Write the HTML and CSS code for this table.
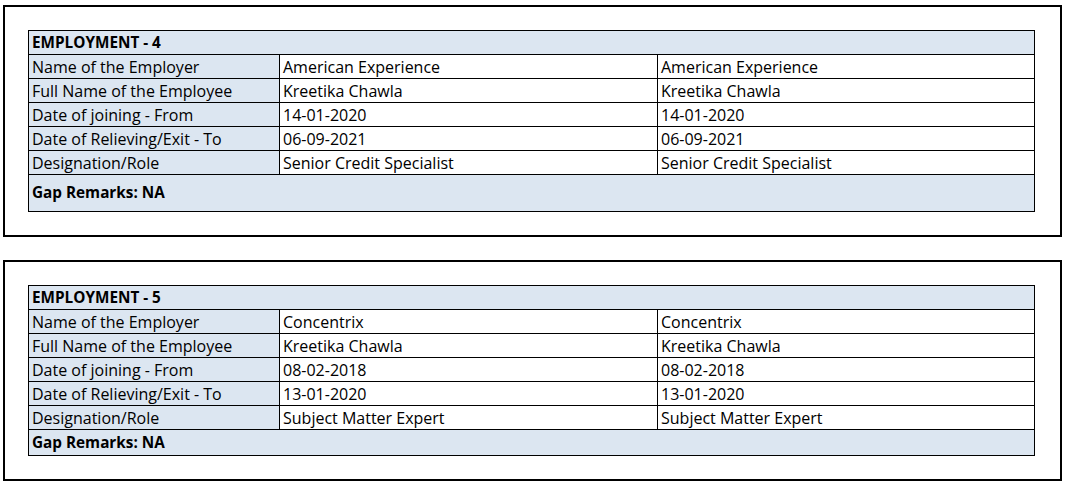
FILE: index.html
```html
<!DOCTYPE html>
<html>
<head>
<meta charset="utf-8">
<link rel="stylesheet" href="styles.css">
</head>
<body>
<div class="page">
  <section class="box">
    <div class="sheet">
      <div class="cell head">EMPLOYMENT - 4</div>
      <div class="cell label">Name of the Employer</div>
      <div class="cell">American Experience</div>
      <div class="cell">American Experience</div>
      <div class="cell label">Full Name of the Employee</div>
      <div class="cell">Kreetika Chawla</div>
      <div class="cell">Kreetika Chawla</div>
      <div class="cell label">Date of joining - From</div>
      <div class="cell">14-01-2020</div>
      <div class="cell">14-01-2020</div>
      <div class="cell label">Date of Relieving/Exit - To</div>
      <div class="cell">06-09-2021</div>
      <div class="cell">06-09-2021</div>
      <div class="cell label">Designation/Role</div>
      <div class="cell">Senior Credit Specialist</div>
      <div class="cell">Senior Credit Specialist</div>
      <div class="cell remarks tall">Gap Remarks: NA</div>
    </div>
  </section>
  <section class="box">
    <div class="sheet">
      <div class="cell head">EMPLOYMENT - 5</div>
      <div class="cell label">Name of the Employer</div>
      <div class="cell">Concentrix</div>
      <div class="cell">Concentrix</div>
      <div class="cell label">Full Name of the Employee</div>
      <div class="cell">Kreetika Chawla</div>
      <div class="cell">Kreetika Chawla</div>
      <div class="cell label">Date of joining - From</div>
      <div class="cell">08-02-2018</div>
      <div class="cell">08-02-2018</div>
      <div class="cell label">Date of Relieving/Exit - To</div>
      <div class="cell">13-01-2020</div>
      <div class="cell">13-01-2020</div>
      <div class="cell label">Designation/Role</div>
      <div class="cell">Subject Matter Expert</div>
      <div class="cell">Subject Matter Expert</div>
      <div class="cell remarks short">Gap Remarks: NA</div>
    </div>
  </section>
</div>
</body>
</html>
```
FILE: styles.css
```css
html, body {
  margin: 0;
  padding: 0;
  background: #ffffff;
}
.page {
  padding: 5px 0 0 3px;
  display: flex;
  flex-direction: column;
  gap: 23px;
  align-items: flex-start;
}
.box {
  width: 1059px;
  box-sizing: border-box;
  border: 2px solid #000;
  padding: 23px 25px 23px 23px;
}
.sheet {
  display: grid;
  grid-template-columns: 251px 378px 377px;
  border-top: 1px solid #000;
  border-left: 1px solid #000;
  font-family: "Open Sans", sans-serif;
  font-size: 16px;
  color: #000;
}
.cell {
  box-sizing: border-box;
  height: 24px;
  border-right: 1px solid #000;
  border-bottom: 1px solid #000;
  padding: 2px 0 0 3px;
  line-height: 21px;
  white-space: nowrap;
  overflow: hidden;
}
.head, .remarks {
  grid-column: 1 / -1;
  background: #dce6f1;
  font-weight: bold;
  font-size: 15.3px;
}
.head {
  padding-top: 1px;
}
.label {
  background: #dce6f1;
}
.remarks.tall {
  height: 37px;
  padding-top: 7px;
}
.remarks.short {
  height: 26px;
  padding-top: 2px;
}
```
